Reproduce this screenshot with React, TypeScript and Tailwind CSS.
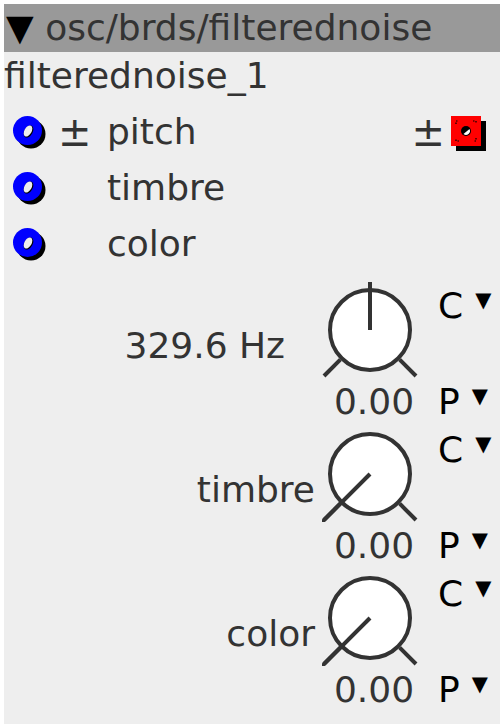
import React from 'react';

const Jack: React.FC = () => (
    <svg width="36" height="36" viewBox="0 0 36 36" className="shrink-0">
        <circle cx="19" cy="19" r="14.5" fill="#000" />
        <circle cx="15.5" cy="15.5" r="14.5" fill="#0000ff" />
        <ellipse cx="16.5" cy="16.5" rx="4.2" ry="6.6" transform="rotate(30 16.5 16.5)" fill="#000" />
        <ellipse cx="16" cy="16" rx="3.6" ry="6" transform="rotate(30 16 16)" fill="#eeeeee" />
    </svg>
);

const RedButton: React.FC = () => (
    <svg width="38" height="38" viewBox="0 0 38 38" className="shrink-0">
        <rect x="5" y="5" width="30" height="30" fill="#000" />
        <rect x="0" y="0" width="30" height="30" fill="#ff0000" />
        <path d="M5 8 V5 H8 M22 5 H25 V8 M25 22 V25 H22 M8 25 H5 V22" stroke="#000" strokeWidth="1.2" strokeDasharray="1.5 1.5" fill="none" />
        <circle cx="15" cy="15" r="5" fill="#000" />
        <path d="M12.5 18 A4 4 0 0 0 18.5 13 Z" fill="#fff" />
    </svg>
);

interface KnobProps {
    angle: number; // degrees, 0 = up, clockwise
}

const Knob: React.FC<KnobProps> = ({ angle }) => {
    const rad = (angle * Math.PI) / 180;
    const ex = 48 + Math.sin(rad) * 70;
    const ey = 48 - Math.cos(rad) * 70;
    return (
        <svg width="96" height="96" viewBox="0 0 96 96" className="block">
            <line x1="18.3" y1="77.7" x2="2" y2="94" stroke="#333" strokeWidth="4" />
            <line x1="77.7" y1="77.7" x2="94" y2="94" stroke="#333" strokeWidth="4" />
            <circle cx="48" cy="48" r="40" fill="#fff" stroke="#333" strokeWidth="4" />
            <line x1="48" y1="48" x2={ex} y2={ey} stroke="#333" strokeWidth="4" />
        </svg>
    );
};

const Selector: React.FC<{ letter: string }> = ({ letter }) => (
    <div className="flex items-start h-12">
        <span className="leading-[48px] text-black">{letter}</span>
        <span className="text-[21px] leading-[21px] text-black ml-[12px] mt-[8px]">▼</span>
    </div>
);

interface GroupProps {
    label: string;
    labelPad: string;
    angle: number;
}

const KnobGroup: React.FC<GroupProps> = ({ label, labelPad, angle }) => (
    <div className="flex h-36">
        <div className={`flex-1 text-right leading-[48px] pt-[40px] ${labelPad}`}>{label}</div>
        <div className="w-24 flex flex-col">
            <Knob angle={angle} />
            <div className="leading-[48px] text-center pl-[8px] whitespace-nowrap">0.00</div>
        </div>
        <div className="w-[82px] pl-5 flex flex-col justify-between">
            <Selector letter="C" />
            <Selector letter="P" />
        </div>
    </div>
);

const inputs = [
    { name: 'pitch', plusMinus: true },
    { name: 'timbre', plusMinus: false },
    { name: 'color', plusMinus: false },
];

const App: React.FC = () => {
    return (
        <div className="min-h-screen bg-white p-1">
            <div className="w-[496px] h-[720px] bg-[#eeeeee] text-[#333333] text-[36px] font-['DejaVu_Sans',sans-serif]">
                <div className="h-12 bg-[#999999] leading-[48px] whitespace-nowrap">
                    <span className="text-black ml-[2px]">▼</span> osc/brds/filterednoise
                </div>
                <div className="h-[52px] leading-[48px]">filterednoise_1</div>
                {inputs.map(input => (
                    <div key={input.name} className="h-14 flex items-center leading-[56px]">
                        <div className="ml-2 w-[46px] pt-[2px]">
                            <Jack />
                        </div>
                        <span className="w-[49px] text-[40px]">{input.plusMinus ? '±' : ''}</span>
                        <span>{input.name}</span>
                        {input.plusMinus && (
                            <div className="ml-auto flex items-center">
                                <span className="mr-[6px] text-[40px]">±</span>
                                <div className="pt-[5px] mr-[11px]">
                                    <RedButton />
                                </div>
                            </div>
                        )}
                    </div>
                ))}
                <div className="mt-[10px]">
                    <KnobGroup label="329.6 Hz" labelPad="pr-[37px]" angle={0} />
                    <KnobGroup label="timbre" labelPad="pr-[7px]" angle={-135} />
                    <KnobGroup label="color" labelPad="pr-[7px]" angle={-135} />
                </div>
            </div>
        </div>
    );
};

export default App;
